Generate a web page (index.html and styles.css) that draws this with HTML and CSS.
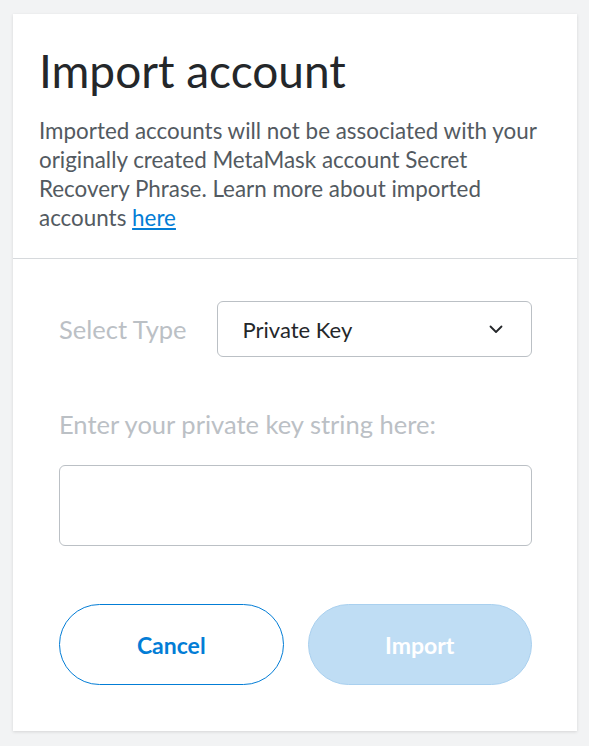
FILE: index.html
```html
<!DOCTYPE html>
<html>
<head>
<meta charset="utf-8">
<link rel="stylesheet" href="styles.css">
</head>
<body>
<div class="card">
  <div class="header">
    <h1 class="title">Import account</h1>
    <p class="desc">Imported accounts will not be associated with your originally created MetaMask account Secret Recovery Phrase. Learn more about imported accounts <a class="link" href="#">here</a></p>
  </div>
  <div class="form">
    <div class="type-row">
      <span class="label">Select Type</span>
      <div class="select">
        <span class="select-text">Private Key</span>
        <svg class="chevron" width="16" height="16" viewBox="0 0 16 16"><path d="M2.5 5.5l5.5 5.5 5.5-5.5" fill="none" stroke="#24272a" stroke-width="1.8" stroke-linecap="round" stroke-linejoin="round"/></svg>
      </div>
    </div>
    <div class="key-label">Enter your private key string here:</div>
    <div class="key-input"></div>
    <div class="buttons">
      <button class="btn btn-cancel">Cancel</button>
      <button class="btn btn-import">Import</button>
    </div>
  </div>
</div>
</body>
</html>
```
FILE: styles.css
```css
html, body {
  margin: 0;
  padding: 0;
  background: #f2f3f4;
}
body {
  padding: 14px 12px 15px 13px;
  font-family: "Lato", "Roboto", sans-serif;
}
.card {
  width: 564px;
  height: 717px;
  background: #fff;
  box-shadow: 0 1px 3px rgba(0,0,0,0.12);
  display: flex;
  flex-direction: column;
}
.header {
  padding: 28px 26px 26px 26px;
  border-bottom: 1px solid #d6d9dc;
}
.title {
  margin: 0;
  font-size: 46px;
  font-weight: 400;
  line-height: 57px;
  color: #24272a;
}
.desc {
  margin: 17px 0 0 0;
  font-size: 22.4px;
  line-height: 29px;
  color: #535a61;
}
.link {
  color: #037dd6;
  text-decoration: underline;
}
.form {
  padding: 42px 45px 0 46px;
  display: flex;
  flex-direction: column;
}
.type-row {
  display: flex;
  align-items: center;
  gap: 30px;
}
.label {
  font-size: 25.5px;
  color: #bbc0c5;
}
.select {
  flex: 1;
  height: 56px;
  box-sizing: border-box;
  border: 1px solid #bbc0c5;
  border-radius: 6px;
  display: flex;
  align-items: center;
  justify-content: space-between;
  padding: 0 27px 0 25px;
}
.select-text {
  font-size: 22px;
  color: #24272a;
}
.key-label {
  margin-top: 52px;
  font-size: 25.5px;
  color: #bbc0c5;
}
.key-input {
  margin-top: 26px;
  height: 81px;
  box-sizing: border-box;
  border: 1px solid #bbc0c5;
  border-radius: 6px;
}
.buttons {
  margin-top: 58px;
  display: flex;
  gap: 24px;
}
.btn {
  flex: 1;
  height: 81px;
  border-radius: 41px;
  font-family: inherit;
  font-size: 23px;
  font-weight: 700;
  cursor: pointer;
}
.btn-cancel {
  background: #fff;
  border: 1px solid #037dd6;
  color: #037dd6;
}
.btn-import {
  background: #bfddf4;
  border: 1px solid #a9d0ef;
  color: #fff;
}
```
